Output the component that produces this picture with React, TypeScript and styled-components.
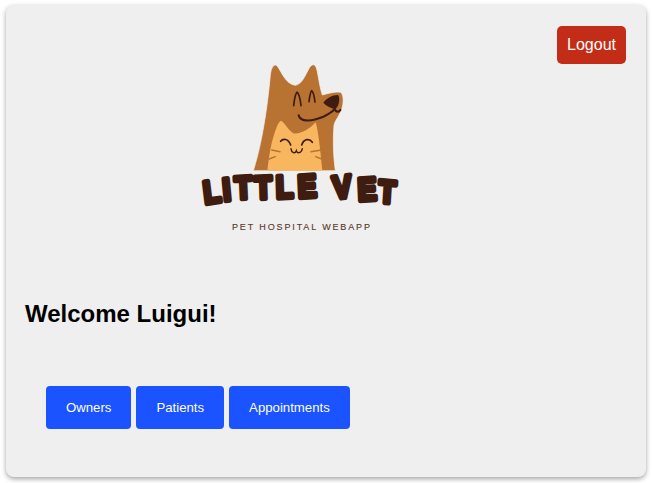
import styled, { createGlobalStyle } from "styled-components";

const GlobalStyle = createGlobalStyle`
  html, body {
    margin: 0;
    padding: 0;
    background: #fff;
    font-family: "Liberation Sans", Arial, sans-serif;
  }
`;

const Page = styled.div`
  width: 652px;
  height: 483px;
  padding: 5px 6px 6px;
  box-sizing: border-box;
  overflow: hidden;
`;

const Card = styled.main`
  position: relative;
  height: 472px;
  box-sizing: border-box;
  padding: 45px 19px 0;
  background: #efefef;
  border-radius: 8px;
  box-shadow: 0 2px 5px rgba(0, 0, 0, 0.36);
`;

const LogoutButton = styled.button`
  position: absolute;
  top: 21px;
  right: 20px;
  width: 69px;
  height: 38px;
  padding: 0;
  border: none;
  border-radius: 5px;
  background: #c32d17;
  color: #fff;
  font: 16px "Liberation Sans", Arial, sans-serif;
`;

const LogoWrap = styled.div`
  margin-left: 155px;
  height: 190px;
`;

const Logo = styled.svg`
  display: block;
  width: 240px;
  height: 190px;
`;

const Title = styled.h1`
  margin: 60px 0 0;
  font-size: 24px;
  line-height: 28px;
  font-weight: 700;
  color: #000;
`;

const NavRow = styled.nav`
  display: flex;
  gap: 5px;
  margin: 58px 0 0 21px;
`;

const NavButton = styled.button`
  height: 43px;
  padding: 0 20px;
  border: none;
  border-radius: 4px;
  background: #1a53ff;
  color: #fff;
  font: 13.2px "Liberation Sans", Arial, sans-serif;
`;

const LogoTitle = styled.text`
  font-family: "Liberation Sans", Arial, sans-serif;
  font-weight: 700;
  font-size: 96px;
  fill: #3e1c10;
  stroke: #3e1c10;
  stroke-width: 15px;
  stroke-linejoin: round;
`;

const LogoTagline = styled.text`
  font-family: "Liberation Sans", Arial, sans-serif;
  font-size: 27px;
  fill: #5a3a2c;
  stroke: #5a3a2c;
  stroke-width: 0.4px;
  text-anchor: middle;
`;

// per-letter placement, the wordmark wobbles along a slight arch
const titleScale = 0.88;
const titleX = [74, 131, 166, 225, 289, 355, 430, 461, 535, 594]
  .map((x) => (x / titleScale).toFixed(1))
  .join(" ");
const titleY = "462 453 448 447 445 443 443 447 452 457";
const titleRotate = "-8 -6 -3 -2 -2 -3 0 -6 -3 4";

function VetLogo() {
  return (
    <Logo viewBox="0 0 720 570" role="img" aria-label="Little Vet logo">
      {/* dog */}
      <path
        fill="#b87333"
        stroke="#f6f6f6"
        strokeWidth="2"
        d="M220 362 C240 300 260 200 271 75 C274 50 283 38 293 50 C306 68 316 100 345 106 C366 104 376 75 389 52 C399 38 408 42 412 65 C417 90 420 115 427 135 C445 130 468 124 482 127 C492 135 491 160 485 178 C478 198 466 210 462 225 C458 270 460 320 466 362 Z"
      />
      <path
        fill="#3e1c10"
        d="M430 158 C438 145 460 134 474 135 C481 142 478 168 466 178 C452 174 438 168 430 158 Z"
      />
      <g fill="none" stroke="#3e1c10" strokeLinecap="round" strokeWidth="5">
        <path d="M341 167 C343 150 346 130 351 127 C356 130 361 150 363 167" />
        <path d="M387 155 C389 140 391 124 395 122 C399 125 403 140 405 156" />
        <path strokeWidth="6.5" d="M356 196 C362 220 400 212 430 200 C445 193 456 186 464 178 C468 186 476 188 481 180" />
      </g>
      {/* cat */}
      <path
        fill="#f8b75e"
        d="M262 362 C267 320 272 285 282 255 C288 235 295 215 303 212 C312 215 325 240 340 250 C360 254 388 238 407 217 C414 240 420 290 427 362 Z"
      />
      <g fill="none" stroke="#3e1c10" strokeLinecap="round" strokeWidth="5">
        <path d="M302 274 C309 264 325 266 332 285" />
        <path d="M365 285 C372 266 388 264 397 277" />
        <path strokeWidth="4" d="M333 296 C335 311 346 311 349 302 C352 311 364 311 367 296" />
      </g>
      <g fill="none" stroke="#b87333" strokeLinecap="round" strokeWidth="4.5">
        <path d="M275 300 L300 305" />
        <path d="M267 327 L286 320" />
        <path d="M393 305 L424 300" />
        <path d="M407 320 L425 327" />
      </g>
      <LogoTitle
        x={titleX}
        y={titleY}
        rotate={titleRotate}
        transform={`scale(${titleScale} 1)`}
      >
        LITTLE VET
      </LogoTitle>
      <LogoTagline x="363" y="540" textLength="414" lengthAdjust="spacing">
        PET HOSPITAL WEBAPP
      </LogoTagline>
    </Logo>
  );
}

export default function App() {
  return (
    <>
      <GlobalStyle />
      <Page>
        <Card>
          <LogoutButton>Logout</LogoutButton>
          <LogoWrap>
            <VetLogo />
          </LogoWrap>
          <Title>Welcome Luigui!</Title>
          <NavRow>
            <NavButton>Owners</NavButton>
            <NavButton>Patients</NavButton>
            <NavButton>Appointments</NavButton>
          </NavRow>
        </Card>
      </Page>
    </>
  );
}
